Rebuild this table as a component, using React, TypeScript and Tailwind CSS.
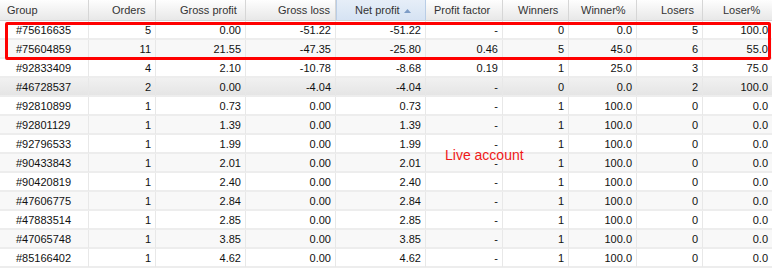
const columns = [
  { label: "Group", headPad: "pl-[7px]" },
  { label: "Orders", headPad: "pl-[23px]" },
  { label: "Gross profit", headPad: "pl-[24px]" },
  { label: "Gross loss", headPad: "pl-[32px]" },
  { label: "Net profit", headPad: "pl-[18px]" },
  { label: "Profit factor", headPad: "pl-[8px]" },
  { label: "Winners", headPad: "pl-[15px]" },
  { label: "Winner%", headPad: "pl-[12px]" },
  { label: "Losers", headPad: "pl-[24px]" },
  { label: "Loser%", headPad: "pl-[20px]" },
];

const rows: string[][] = [
  ["#75616635", "5", "0.00", "-51.22", "-51.22", "-", "0", "0.0", "5", "100.0"],
  ["#75604859", "11", "21.55", "-47.35", "-25.80", "0.46", "5", "45.0", "6", "55.0"],
  ["#92833409", "4", "2.10", "-10.78", "-8.68", "0.19", "1", "25.0", "3", "75.0"],
  ["#46728537", "2", "0.00", "-4.04", "-4.04", "-", "0", "0.0", "2", "100.0"],
  ["#92810899", "1", "0.73", "0.00", "0.73", "-", "1", "100.0", "0", "0.0"],
  ["#92801129", "1", "1.39", "0.00", "1.39", "-", "1", "100.0", "0", "0.0"],
  ["#92796533", "1", "1.99", "0.00", "1.99", "-", "1", "100.0", "0", "0.0"],
  ["#90433843", "1", "2.01", "0.00", "2.01", "-", "1", "100.0", "0", "0.0"],
  ["#90420819", "1", "2.40", "0.00", "2.40", "-", "1", "100.0", "0", "0.0"],
  ["#47606775", "1", "2.84", "0.00", "2.84", "-", "1", "100.0", "0", "0.0"],
  ["#47883514", "1", "2.85", "0.00", "2.85", "-", "1", "100.0", "0", "0.0"],
  ["#47065748", "1", "3.85", "0.00", "3.85", "-", "1", "100.0", "0", "0.0"],
  ["#85166402", "1", "4.62", "0.00", "4.62", "-", "1", "100.0", "0", "0.0"],
];

const grid = "grid grid-cols-[89px_67px_90px_90px_90px_77px_66px_68px_66px_69px]";

export default function App() {
  return (
    <div
      className="relative w-[772px] h-[274px] bg-white overflow-hidden text-[11px] text-[#111]"
      style={{ fontFamily: '"Liberation Sans", Arial, sans-serif' }}
    >
      {/* Header */}
      <div className={`${grid} h-[21px] border-b border-[#d3d3d3] bg-gradient-to-b from-[#fefefe] to-[#e8e8e8]`}>
        {columns.map((col, i) => {
          const sorted = col.label === "Net profit";
          return (
            <div
              key={col.label}
              className={`flex items-center ${col.headPad} text-[#333] ${
                sorted
                  ? "bg-gradient-to-b from-[#e6eef8] to-[#d6e3f3] border-x border-[#b9cde6]"
                  : i < columns.length - 1
                  ? "border-r border-[#d6d6d6]"
                  : ""
              }`}
            >
              {col.label}
              {sorted && (
                <svg width="7" height="4" viewBox="0 0 7 4" className="ml-[4px] mt-[1px]">
                  <path d="M0 4 L3.5 0 L7 4 Z" fill="#7d9cc6" />
                </svg>
              )}
            </div>
          );
        })}
      </div>

      {/* Rows */}
      {rows.map((row, r) => {
        const hover = r === 3;
        const bg = hover
          ? "bg-gradient-to-b from-[#f1f1f1] to-[#e5e5e5]"
          : r % 2 === 1
          ? "bg-[#f8f8f8]"
          : "bg-white";
        return (
          <div key={row[0]} className={`${grid} h-[19px] border-b-2 border-[#ededed] ${bg}`}>
            {row.map((cell, c) => (
              <div
                key={c}
                className={`flex items-center pt-[1px] ${
                  c === 0 ? "pl-[16px]" : "justify-end pr-[4px]"
                } ${c < row.length - 1 ? "border-r border-[#e8e8e8]" : ""}`}
              >
                {cell}
              </div>
            ))}
          </div>
        );
      })}

      {/* Annotations */}
      <div className="absolute left-[5px] top-[22px] w-[766px] h-[38px] border-[3px] border-[#ff0000] rounded-[2px]" />
      <div className="absolute left-[445px] top-[147px] text-[14px] leading-[16px] text-[#f01818]">
        Live account
      </div>
    </div>
  );
}
